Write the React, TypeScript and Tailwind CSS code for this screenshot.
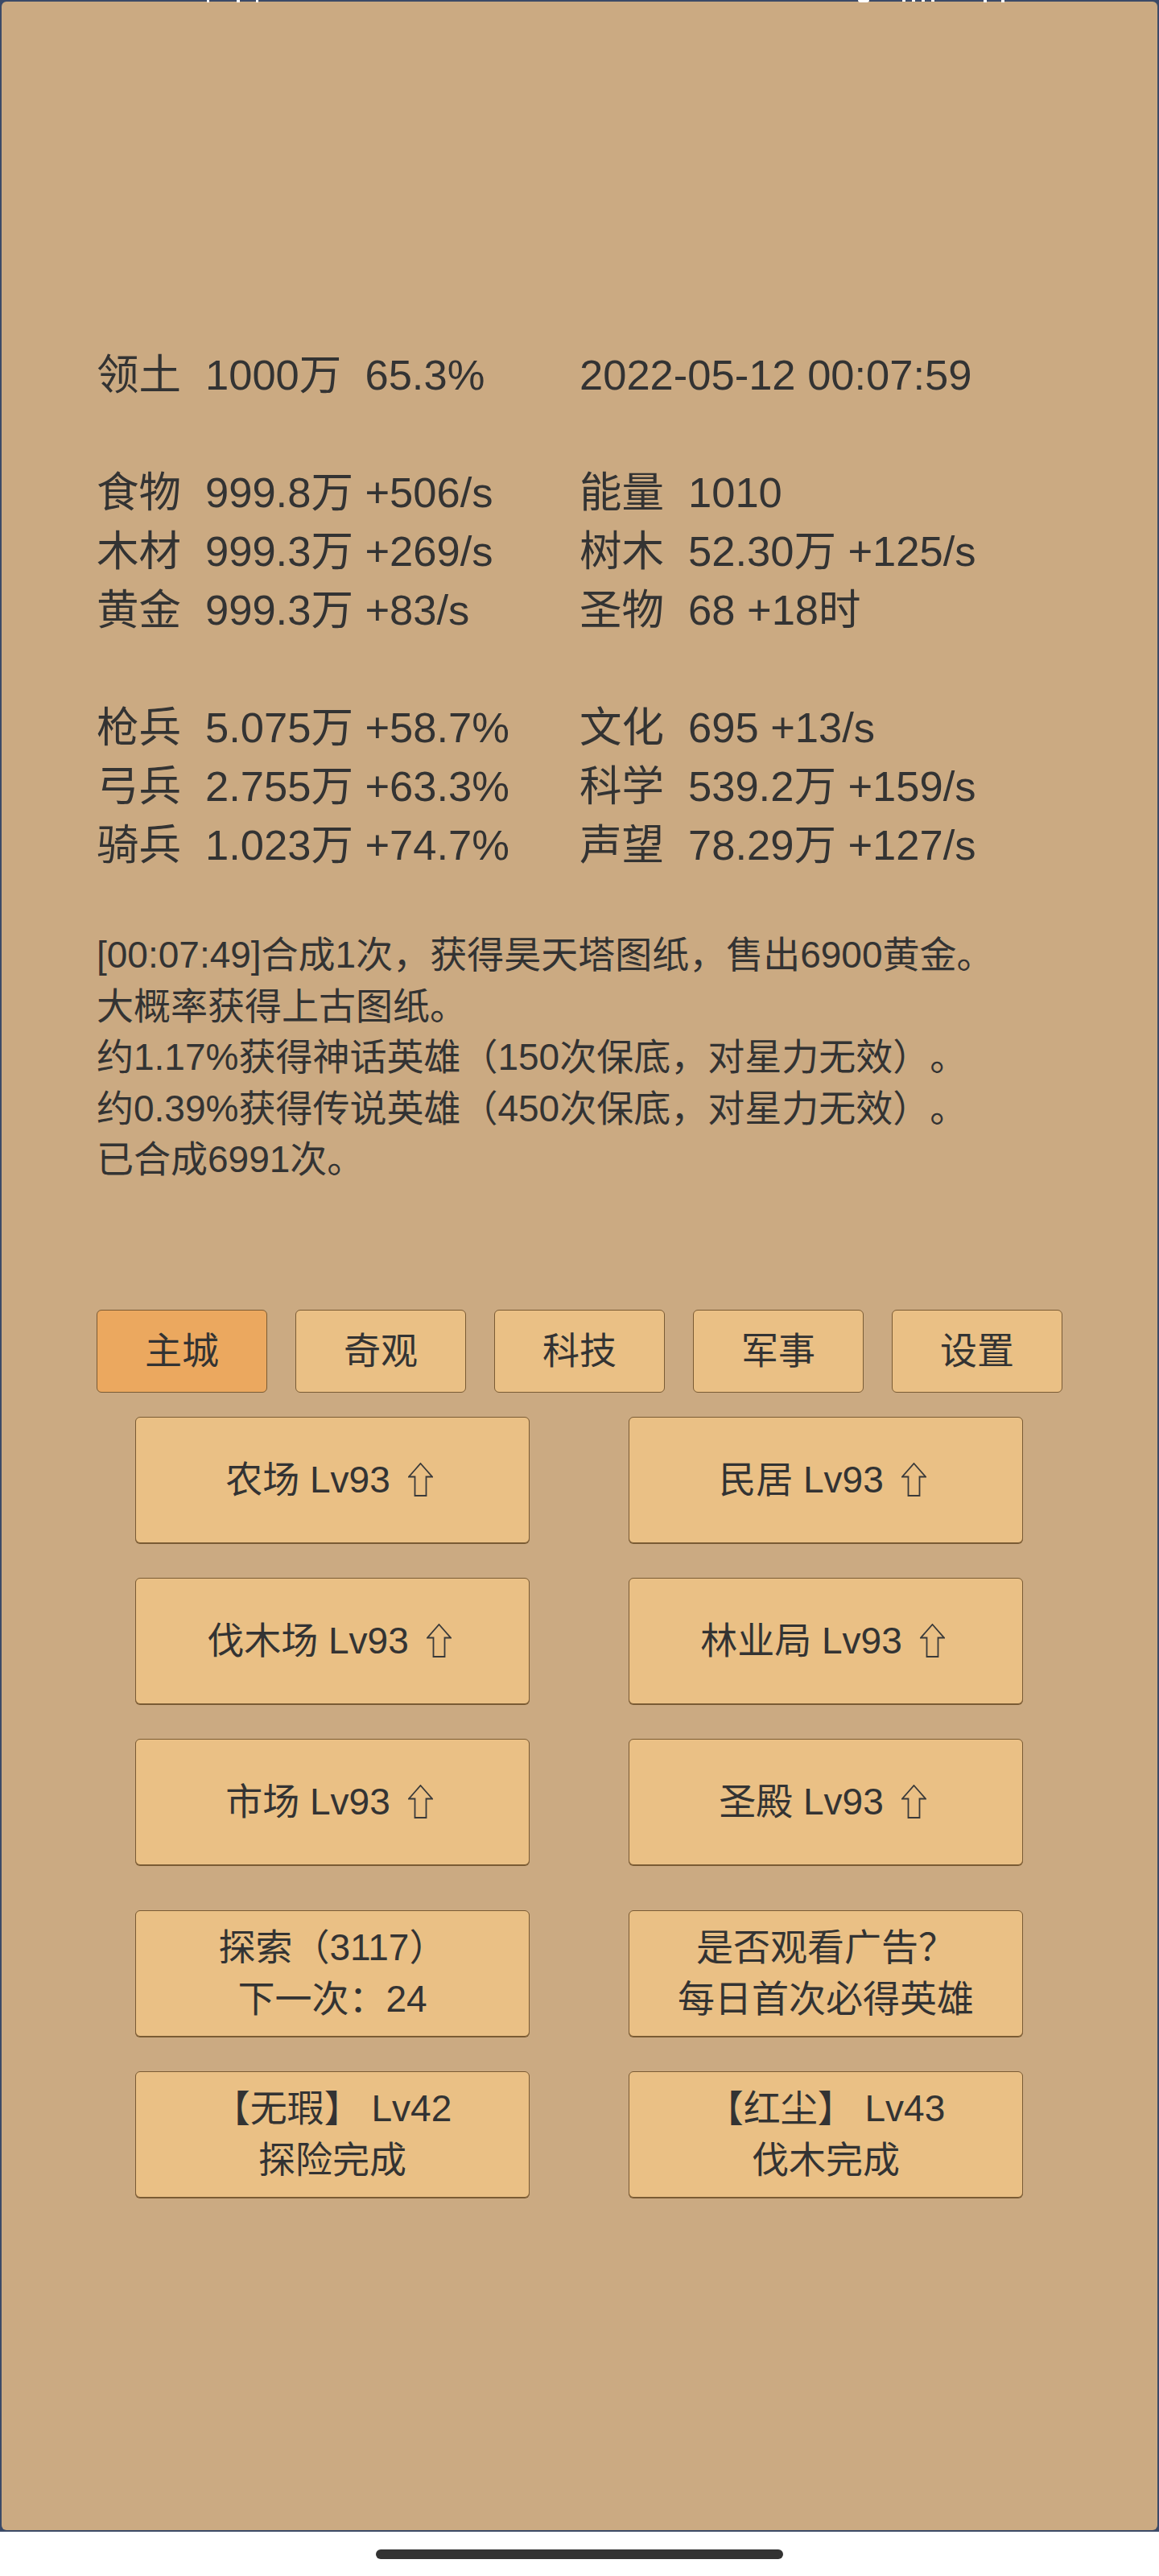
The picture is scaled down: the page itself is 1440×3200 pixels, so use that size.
import React from "react";

const UpArrow = () => (
  <svg width="31" height="42" viewBox="0 0 31 42" className="ml-[22px] shrink-0" aria-hidden>
    <path
      d="M15.5 1 L30 17.5 L22.5 17.5 L22.5 41 L8.5 41 L8.5 17.5 L1 17.5 Z"
      fill="none"
      stroke="#3a3a3a"
      strokeWidth="1.8"
      strokeLinejoin="miter"
    />
  </svg>
);

const leftRows: [string, string][] = [
  ["食物", "999.8万 +506/s"],
  ["木材", "999.3万 +269/s"],
  ["黄金", "999.3万 +83/s"],
];
const rightRows: [string, string][] = [
  ["能量", "1010"],
  ["树木", "52.30万 +125/s"],
  ["圣物", "68 +18时"],
];
const leftRows2: [string, string][] = [
  ["枪兵", "5.075万 +58.7%"],
  ["弓兵", "2.755万 +63.3%"],
  ["骑兵", "1.023万 +74.7%"],
];
const rightRows2: [string, string][] = [
  ["文化", "695 +13/s"],
  ["科学", "539.2万 +159/s"],
  ["声望", "78.29万 +127/s"],
];

function StatCell({ label, value }: { label: string; value: string }) {
  return (
    <div className="flex h-[73px] items-center whitespace-pre">
      <span className="w-[135px] shrink-0">{label}</span>
      <span>{value}</span>
    </div>
  );
}

function Pairs({ left, right }: { left: [string, string][]; right: [string, string][] }) {
  return (
    <>
      {left.map((l, i) => (
        <React.Fragment key={i}>
          <StatCell label={l[0]} value={l[1]} />
          <StatCell label={right[i][0]} value={right[i][1]} />
        </React.Fragment>
      ))}
    </>
  );
}

const tabs = ["主城", "奇观", "科技", "军事", "设置"];
const buildings = ["农场", "民居", "伐木场", "林业局", "市场", "圣殿"];

const btn =
  "flex w-[490px] h-[157px] flex-col items-center justify-center rounded-[6px] border-[1.5px] border-[#7a5b34] bg-[#eac085] shadow-[0_1px_0_#7a5b34]";

export default function App() {
  return (
    <div className="w-[1440px] bg-white font-['Liberation_Sans','Noto_Sans_CJK_SC',sans-serif] text-[#333333] [text-spacing-trim:space-all]">
      <div className="relative h-[3145px] bg-[#3b4a67] p-[2px]">
        {/* status bar remnants */}
        <div className="absolute left-[257px] top-0 h-[3px] w-[3px] bg-white" />
        <div className="absolute left-[294px] top-0 h-[3px] w-[4px] bg-white" />
        <div className="absolute left-[318px] top-0 h-[3px] w-[3px] bg-white" />
        <div className="absolute left-[1066px] top-0 h-[3px] w-[14px] rounded-b-full bg-white" />
        <div className="absolute left-[1121px] top-0 h-[2px] w-[4px] bg-white" />
        <div className="absolute left-[1133px] top-0 h-[2px] w-[4px] bg-white" />
        <div className="absolute left-[1145px] top-0 h-[2px] w-[4px] bg-white" />
        <div className="absolute left-[1157px] top-0 h-[2px] w-[4px] bg-white" />
        <div className="absolute left-[1222px] top-0 h-[3px] w-[4px] bg-white" />
        <div className="absolute left-[1244px] top-0 h-[3px] w-[4px] bg-white" />

        <div className="h-full rounded-[6px] bg-[#cbaa82] px-[118px] pt-[428px]">
          {/* stats */}
          <div className="grid grid-cols-[600px_600px] text-[52.5px]">
            <StatCell label="领土" value={"1000万  65.3%"} />
            <div className="flex h-[73px] items-center">2022-05-12 00:07:59</div>
            <div className="col-span-2 h-[73px]" />
            <Pairs left={leftRows} right={rightRows} />
            <div className="col-span-2 h-[73px]" />
            <Pairs left={leftRows2} right={rightRows2} />
          </div>

          {/* log */}
          <div className="mt-[68px] text-[46px] leading-[63.5px]">
            <div>[00:07:49]合成1次，获得昊天塔图纸，售出6900黄金。</div>
            <div>大概率获得上古图纸。</div>
            <div>约1.17%获得神话英雄（150次保底，对星力无效）。</div>
            <div>约0.39%获得传说英雄（450次保底，对星力无效）。</div>
            <div>已合成6991次。</div>
          </div>

          {/* tabs */}
          <div className="mt-[154px] flex gap-[35px]">
            {tabs.map((t, i) => (
              <div
                key={t}
                className={`flex h-[103px] w-[212px] items-center justify-center rounded-[6px] border-[1.5px] border-[#7a5b34] text-[46px] ${
                  i === 0 ? "bg-[#eba85f]" : "bg-[#eac085]"
                }`}
              >
                {t}
              </div>
            ))}
          </div>

          {/* buildings */}
          <div className="mt-[30px] px-[48px]">
            <div className="grid grid-cols-[490px_490px] gap-x-[123px] gap-y-[43px] text-[46px]">
              {buildings.map((b) => (
                <div key={b} className={btn}>
                  <div className="flex items-center pr-[8px]">
                    <span>{b} Lv93</span>
                    <UpArrow />
                  </div>
                </div>
              ))}
            </div>
            <div className="mt-[56px] grid grid-cols-[490px_490px] gap-x-[123px] gap-y-[43px] text-[46px] leading-[64px]">
              <div className={btn}>
                <div>探索（3117）</div>
                <div>下一次：24</div>
              </div>
              <div className={btn}>
                <div>是否观看广告？</div>
                <div>每日首次必得英雄</div>
              </div>
              <div className={btn}>
                <div className="whitespace-pre">【无瑕】 Lv42</div>
                <div>探险完成</div>
              </div>
              <div className={btn}>
                <div className="whitespace-pre">【红尘】 Lv43</div>
                <div>伐木完成</div>
              </div>
            </div>
          </div>
        </div>
      </div>
      <div className="flex h-[55px] justify-center pt-[22px]">
        <div className="h-[12px] w-[506px] rounded-full bg-[#333333]" />
      </div>
    </div>
  );
}
